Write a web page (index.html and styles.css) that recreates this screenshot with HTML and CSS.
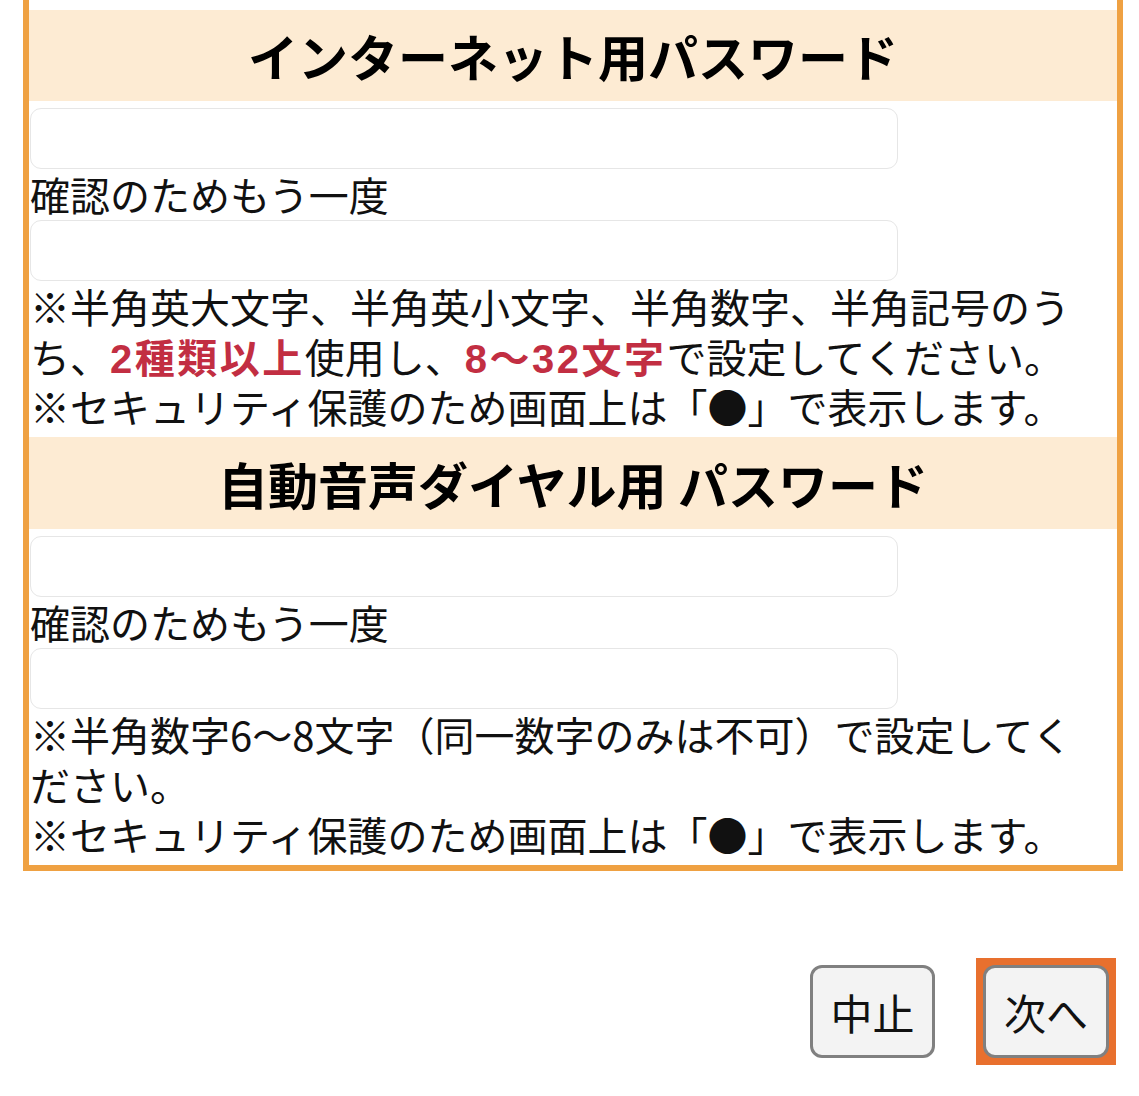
FILE: index.html
```html
<!DOCTYPE html>
<html lang="ja">
<head>
<meta charset="utf-8">
<title>パスワード設定</title>
<link rel="stylesheet" href="styles.css">
</head>
<body>
<div class="panel">
  <h2 class="section-title">インターネット用パスワード</h2>
  <div class="field"></div>
  <div class="label">確認のためもう一度</div>
  <div class="field"></div>
  <p class="note">※半角英大文字、半角英小文字、半角数字、半角記号のう<br>ち、<strong class="em">2種類以上</strong>使用し、<strong class="em">8〜32文字</strong>で設定してください。<br>※セキュリティ保護のため画面上は「●」で表示します。</p>

  <h2 class="section-title second">自動音声ダイヤル用 パスワード</h2>
  <div class="field"></div>
  <div class="label">確認のためもう一度</div>
  <div class="field"></div>
  <p class="note">※半角数字6〜8文字（同一数字のみは不可）で設定してく<br>ださい。<br>※セキュリティ保護のため画面上は「●」で表示します。</p>
</div>

<div class="actions">
  <button class="btn">中止</button>
  <span class="focus-ring"><button class="btn">次へ</button></span>
</div>
</body>
</html>
```

FILE: styles.css
```css
html, body {
  margin: 0;
  padding: 0;
  background: #ffffff;
}

body {
  font-family: "Noto Sans CJK JP", "Noto Sans", sans-serif;
  color: #111111;
  width: 1139px;
}

.panel {
  margin-left: 23px;
  width: 1088px;
  border: 6px solid #efa142;
  border-top: none;
  padding: 10px 0 6px 0;
}

.section-title {
  margin: 0;
  height: 91px;
  background: #fdebd3;
  font-size: 50px;
  font-weight: 700;
  line-height: 91px;
  text-align: center;
  color: #000000;
  white-space: nowrap;
}

.section-title.second {
  margin-top: 6px;
  height: 92px;
  line-height: 92px;
}

.field {
  box-sizing: border-box;
  margin: 7px 0 0 1px;
  width: 868px;
  height: 61px;
  border: 1.5px solid #e6e6e6;
  border-radius: 11px;
  background: #ffffff;
}

.label + .field {
  margin-top: 0;
}

.label {
  margin-left: 1px;
  font-size: 40px;
  line-height: 51px;
  height: 51px;
  white-space: nowrap;
}

.note {
  margin: 0 0 0 1px;
  font-size: 40px;
  line-height: 50px;
  white-space: nowrap;
}

.em {
  font-family: "Liberation Sans", "Noto Sans CJK JP", sans-serif;
  color: #c22e42;
  font-weight: 700;
  line-height: 30px;
  letter-spacing: 2.5px;
}

.actions {
  display: flex;
  justify-content: flex-end;
  align-items: center;
  gap: 41px;
  padding: 87px 23px 0 0;
}

.btn {
  box-sizing: border-box;
  width: 125px;
  height: 93px;
  margin: 0;
  padding: 0;
  border: 3px solid #808080;
  border-radius: 12px;
  background: #f3f3f3;
  font-family: "Noto Sans CJK JP", "Noto Sans", sans-serif;
  font-size: 42px;
  color: #111111;
  line-height: 1;
}

.focus-ring {
  display: flex;
  padding: 7px;
  background: #e8702e;
}

.focus-ring .btn {
  width: 126px;
}
```
